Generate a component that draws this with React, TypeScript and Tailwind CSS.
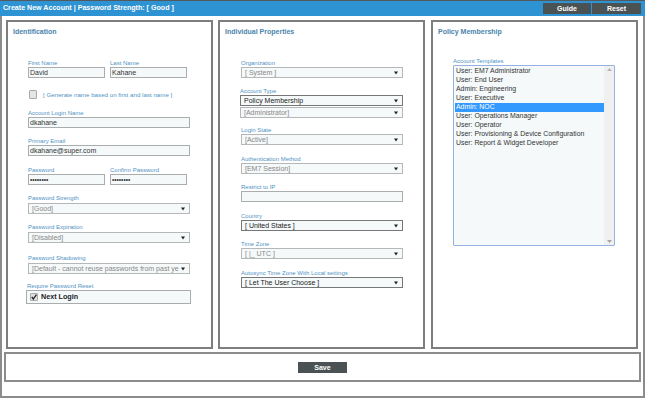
const font = "font-['Liberation_Sans',Arial,sans-serif]";

function Arrow() {
  return (
    <svg width="4" height="4" viewBox="0 0 4 4" className="shrink-0">
      <path d="M0 .4H4L2 3.6Z" fill="#222" />
    </svg>
  );
}

function Label({ text, className = "" }: { text: string; className?: string }) {
  return <div className={`h-[10px] text-[6px] leading-[10px] text-[#4f93c4] whitespace-nowrap ${className}`}>{text}</div>;
}

function Input({ value, className = "" }: { value?: string; className?: string }) {
  return (
    <div className={`h-[11px] border border-[#a9adad] bg-[#f5f9fa] pl-[1px] text-[7px] leading-[9px] text-[#333] whitespace-nowrap overflow-hidden ${className}`}>
      {value}
    </div>
  );
}

function Select({ value, strong, className = "" }: { value: string; strong?: boolean; className?: string }) {
  return (
    <div
      className={`flex h-[11px] items-center justify-between border bg-[#f5f9fa] pl-[3px] pr-[4px] text-[7px] leading-[9px] ${
        strong ? "border-[#777] text-[#222]" : "border-[#b4b8b8] text-[#888]"
      } ${className}`}
    >
      <span className="w-[148px] whitespace-nowrap">{value}</span>
      <Arrow />
    </div>
  );
}

function Panel({ title, className = "", children }: { title: string; className?: string; children: React.ReactNode }) {
  return (
    <section className={`h-[329px] w-[207px] border-2 border-[#7d7f7f] bg-white ${className}`}>
      <h2 className="pl-[5px] pt-[4px] text-[7px] font-bold leading-[12px] text-[#4a84ac]">{title}</h2>
      {children}
    </section>
  );
}

const templates = [
  "User: EM7 Administrator",
  "User: End User",
  "Admin: Engineering",
  "User: Executive",
  "Admin: NOC",
  "User: Operations Manager",
  "User: Operator",
  "User: Provisioning & Device Configuration",
  "User: Report & Widget Developer",
];

export default function App() {
  return (
    <div className={`h-[400px] w-[645px] overflow-hidden bg-white ${font}`}>
      <div className="h-[398px] border-b-2 border-l-2 border-r-2 border-[#8b8d8d] bg-white">
        <header className="-mx-[2px] flex h-[16px] items-center justify-between border-t border-[#55595b] bg-[#2d93d3] pl-[3px] pr-[4px]">
          <span className="text-[7.1px] font-bold text-white">Create New Account | Password Strength: [ Good ]</span>
          <div className="flex gap-[1px]">
            <button className="h-[11px] w-[48px] bg-[#4a5254] text-[7px] font-bold leading-[11px] text-white">Guide</button>
            <button className="h-[11px] w-[49px] bg-[#4a5254] text-[7px] font-bold leading-[11px] text-white">Reset</button>
          </div>
        </header>

        <div className="mt-[4px] flex pl-[4px]">
          <Panel title="Identification">
            <div className="pl-[20px] pr-[20px]">
              <div className="mt-[20px] flex gap-[5px]">
                <div className="w-[77px]">
                  <Label text="First Name" />
                  <Input value="David" className="-mt-[1px]" />
                </div>
                <div className="w-[77px]">
                  <Label text="Last Name" />
                  <Input value="Kahane" className="-mt-[1px]" />
                </div>
              </div>
              <div className="mt-[11px] flex h-[10px] items-center">
                <span className="ml-[1px] h-[9px] w-[8px] rounded-[1px] border border-[#aaa] bg-[#e4e6e6]" />
                <span className="ml-[6px] mt-[2px] text-[6.2px] text-[#4f93c4]">[ Generate name based on first and last name ]</span>
              </div>
              <Label text="Account Login Name" className="mt-[9px]" />
              <Input value="dkahane" className="-mt-[1px] w-[162px]" />
              <Label text="Primary Email" className="mt-[8px]" />
              <Input value="dkahane@super.com" className="-mt-[1px] w-[162px]" />
              <div className="mt-[9px] flex gap-[5px]">
                <div className="w-[77px]">
                  <Label text="Password" />
                  <Input value="••••••••" className="-mt-[1px] !text-[6.5px]" />
                </div>
                <div className="w-[77px]">
                  <Label text="Confirm Password" />
                  <Input value="••••••••" className="-mt-[1px] !text-[6.5px]" />
                </div>
              </div>
              <Label text="Password Strength" className="mt-[8px]" />
              <Select value="[Good]" className="w-[162px]" />
              <Label text="Password Expiration" className="mt-[8px]" />
              <Select value="[Disabled]" className="w-[162px]" />
              <Label text="Password Shadowing" className="mt-[10px]" />
              <Select value="[Default - cannot reuse passwords from past ye" className="w-[162px]" />
              <Label text="Require Password Reset" className="-ml-[1px] mt-[7px]" />
              <div className="-ml-[2px] -mt-[1px] flex h-[14px] w-[165px] items-center border border-[#a9adad] bg-[#f5f9fa] pl-[3px]">
                <span className="flex h-[8px] w-[8px] items-center justify-center rounded-[1px] border border-[#aaa] bg-[#dfe1e1]">
                  <svg width="6" height="6" viewBox="0 0 6 6">
                    <path d="M.8 3 2.3 5 5.4.6" fill="none" stroke="#222" strokeWidth="1.3" />
                  </svg>
                </span>
                <span className="ml-[3px] text-[7.2px] font-bold text-[#222]">Next Login</span>
              </div>
            </div>
          </Panel>

          <Panel title="Individual Properties" className="ml-[5px]">
            <div className="pl-[21px] pr-[20px]">
              <Label text="Organization" className="mt-[20px]" />
              <Select value="[ System ]" className="-mt-[1px]" />
              <Label text="Account Type" className="-ml-[1px] mt-[8px]" />
              <Select value="Policy Membership" strong className="-ml-[1px] -mt-[1px]" />
              <Select value="[Administrator]" className="-ml-[1px] mt-[1px]" />
              <Label text="Login State" className="mt-[7px]" />
              <Select value="[Active]" className="-mt-[1px]" />
              <Label text="Authentication Method" className="mt-[9px]" />
              <Select value="[EM7 Session]" className="-mt-[1px]" />
              <Label text="Restrict to IP" className="mt-[8px]" />
              <Input className="-mt-[1px]" />
              <Label text="Country" className="mt-[9px]" />
              <Select value="[ United States ]" strong className="-mt-[1px]" />
              <Label text="Time Zone" className="mt-[8px]" />
              <Select value="[ |_ UTC ]" className="-mt-[1px]" />
              <Label text="Autosync Time Zone With Local settings" className="mt-[9px]" />
              <Select value="[ Let The User Choose ]" strong className="-mt-[1px]" />
            </div>
          </Panel>

          <Panel title="Policy Membership" className="ml-[6px]">
            <div className="pl-[20px]">
              <Label text="Account Templates" className="mt-[18px]" />
              <div className="-mt-[1px] flex h-[181px] w-[162px] rounded-[1px] border border-[#94b1e2] bg-[#f5f9fa]">
                <ul className="flex-1 pl-[1px] pt-[1px] text-[6.9px] leading-[8.93px] text-[#333]">
                  {templates.map((t) => (
                    <li key={t} className={`whitespace-nowrap pl-[1px] ${t === "Admin: NOC" ? "bg-[#3399ff] text-white" : ""}`}>
                      {t}
                    </li>
                  ))}
                </ul>
                <div className="flex w-[10px] flex-col items-center justify-between bg-[#f0f0f0] py-[2px]">
                  <svg width="5" height="3" viewBox="0 0 5 3">
                    <path d="M0 3 2.5 0 5 3Z" fill="#b5b5b5" />
                  </svg>
                  <svg width="5" height="3" viewBox="0 0 5 3">
                    <path d="M0 0 2.5 3 5 0Z" fill="#a5a5a5" />
                  </svg>
                </div>
              </div>
            </div>
          </Panel>
        </div>

        <div className="ml-[2px] mt-[3px] flex h-[30px] w-[637px] items-center justify-center border-2 border-[#8b8d8d] bg-white">
          <button className="h-[11px] w-[49px] bg-[#4a5254] text-[7px] font-bold leading-[11px] text-white">Save</button>
        </div>
      </div>
    </div>
  );
}
